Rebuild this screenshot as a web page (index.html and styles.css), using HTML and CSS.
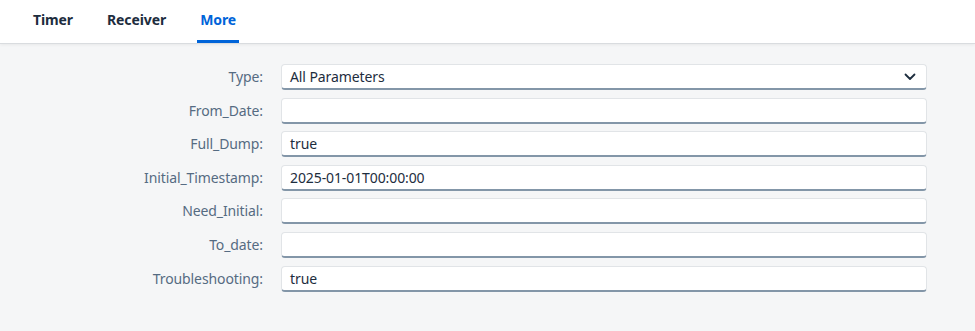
FILE: index.html
```html
<!DOCTYPE html>
<html lang="en">
<head>
  <meta charset="UTF-8">
  <title>Adapter Parameters</title>
  <link rel="stylesheet" href="styles.css">
</head>
<body>

<div class="tab-bar">
  <div class="tab"><span>Timer</span></div>
  <div class="tab"><span>Receiver</span></div>
  <div class="tab active"><span>More</span></div>
</div>

<div class="form">
  <label class="label">Type:</label>
  <div class="field select">
    <span>All Parameters</span>
    <svg class="chevron" width="12" height="8" viewBox="0 0 12 8"><path d="M1.5 1.5 L6 6 L10.5 1.5" fill="none" stroke="#1d2d3e" stroke-width="1.8" stroke-linecap="round" stroke-linejoin="round"/></svg>
  </div>

  <label class="label">From_Date:</label>
  <div class="field"></div>

  <label class="label">Full_Dump:</label>
  <div class="field">true</div>

  <label class="label">Initial_Timestamp:</label>
  <div class="field">2025-01-01T00:00:00</div>

  <label class="label">Need_Initial:</label>
  <div class="field"></div>

  <label class="label">To_date:</label>
  <div class="field"></div>

  <label class="label">Troubleshooting:</label>
  <div class="field">true</div>
</div>

</body>
</html>
```
FILE: styles.css
```css
* {
  margin: 0;
  padding: 0;
  box-sizing: border-box;
}

html, body {
  width: 100%;
  height: 100%;
  background: #f5f6f7;
  font-family: "Noto Sans", "Liberation Sans", sans-serif;
  overflow: hidden;
}

.tab-bar {
  height: 43px;
  background: #fff;
  display: flex;
  padding-left: 30px;
  gap: 28px;
  box-shadow: 0 1px 0 #d9dcdf, 0 2px 3px rgba(0, 0, 0, 0.06);
}

.tab span {
  display: block;
  padding: 0 3px;
  font-size: 14px;
  font-weight: bold;
  color: #1d2d3e;
  line-height: 40px;
  height: 43px;
  border-bottom: 3px solid transparent;
  letter-spacing: -0.1px;
}

.tab.active span {
  color: #0064d9;
  border-bottom-color: #0064d9;
  border-radius: 3px 3px 0 0;
}

.form {
  display: grid;
  grid-template-columns: 263px 646px;
  column-gap: 18px;
  row-gap: 7.6px;
  padding-top: 21px;
}

.label {
  text-align: right;
  font-size: 14px;
  color: #556b82;
  line-height: 26px;
  letter-spacing: -0.1px;
}

.field {
  height: 26px;
  background: #fff;
  border: 1px solid #e1e4e7;
  border-bottom: 2px solid #8396a8;
  border-radius: 4px;
  font-size: 14px;
  color: #1d2d3e;
  line-height: 23px;
  padding: 0 8px;
  letter-spacing: -0.1px;
}

.select {
  display: flex;
  justify-content: space-between;
  align-items: center;
  line-height: normal;
}

.chevron {
  margin-right: 2px;
}
```
